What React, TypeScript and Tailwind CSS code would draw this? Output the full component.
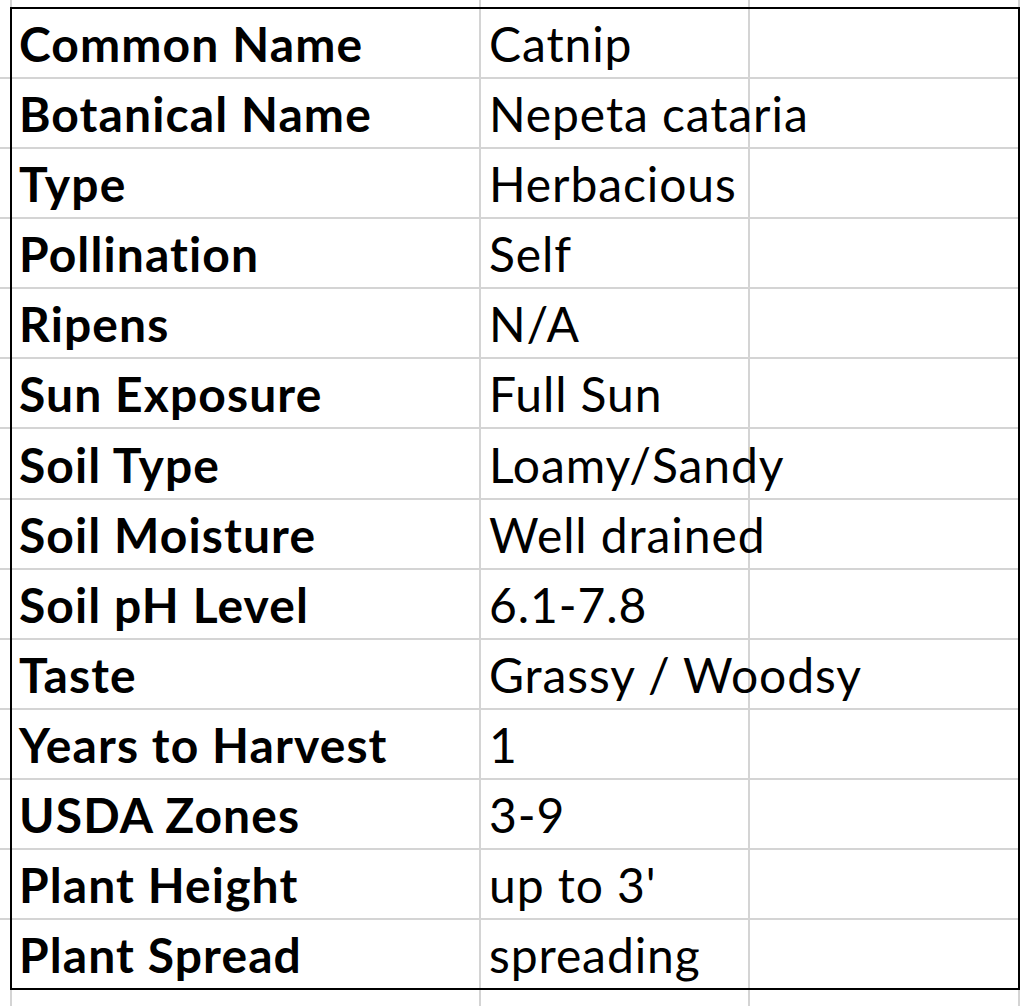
import React from "react";

const rows: [string, string][] = [
  ["Common Name", "Catnip"],
  ["Botanical Name", "Nepeta cataria"],
  ["Type", "Herbacious"],
  ["Pollination", "Self"],
  ["Ripens", "N/A"],
  ["Sun Exposure", "Full Sun"],
  ["Soil Type", "Loamy/Sandy"],
  ["Soil Moisture", "Well drained"],
  ["Soil pH Level", "6.1-7.8"],
  ["Taste", "Grassy / Woodsy"],
  ["Years to Harvest", "1"],
  ["USDA Zones", "3-9"],
  ["Plant Height", "up to 3'"],
  ["Plant Spread", "spreading"],
];

const font = { fontFamily: "Lato, 'Open Sans', sans-serif" };

export default function App() {
  return (
    <div className="w-[1024px] h-[1006px] bg-white overflow-hidden flex flex-col text-black" style={font}>
      {/* top strip */}
      <div className="flex h-[7px] shrink-0">
        <div className="w-[12px] border-r-2 border-[#d4d4d4]" />
        <div className="w-[469px] border-r-2 border-[#d4d4d4]" />
        <div className="w-[269px] border-r-2 border-[#d4d4d4]" />
        <div className="w-[270px] border-r-2 border-[#d4d4d4]" />
        <div className="flex-1" />
      </div>
      {/* middle */}
      <div className="flex h-[983px] shrink-0">
        <div className="w-[10px] flex flex-col pt-[2px] pb-[2px]">
          {rows.map((_, i) => (
            <div key={i} className={`flex-1 ${i < rows.length - 1 ? "border-b-2 border-[#d4d4d4]" : ""}`} />
          ))}
        </div>
        <div className="w-[1010px] border-2 border-black flex flex-col">
          {rows.map(([k, v], i) => (
            <div
              key={k}
              className={`flex flex-1 ${i < rows.length - 1 ? "border-b-2 border-[#d4d4d4]" : ""}`}
            >
              <div className="w-[469px] border-r-2 border-[#d4d4d4] flex items-end pl-[7px] pb-[9px] text-[48px] leading-none font-bold tracking-[1.1px] whitespace-nowrap">
                {k}
              </div>
              <div className="w-[269px] border-r-2 border-[#d4d4d4] flex items-end pl-[8px] pb-[9px] text-[48px] leading-none tracking-[0.9px] whitespace-nowrap overflow-visible relative z-10">
                {v}
              </div>
              <div className="flex-1" />
            </div>
          ))}
        </div>
        <div className="flex-1" />
      </div>
      {/* bottom strip */}
      <div className="flex flex-1">
        <div className="w-[12px] border-r-2 border-[#d4d4d4]" />
        <div className="w-[469px] border-r-2 border-[#d4d4d4]" />
        <div className="w-[269px] border-r-2 border-[#d4d4d4]" />
        <div className="w-[270px] border-r-2 border-[#d4d4d4]" />
        <div className="flex-1" />
      </div>
    </div>
  );
}
